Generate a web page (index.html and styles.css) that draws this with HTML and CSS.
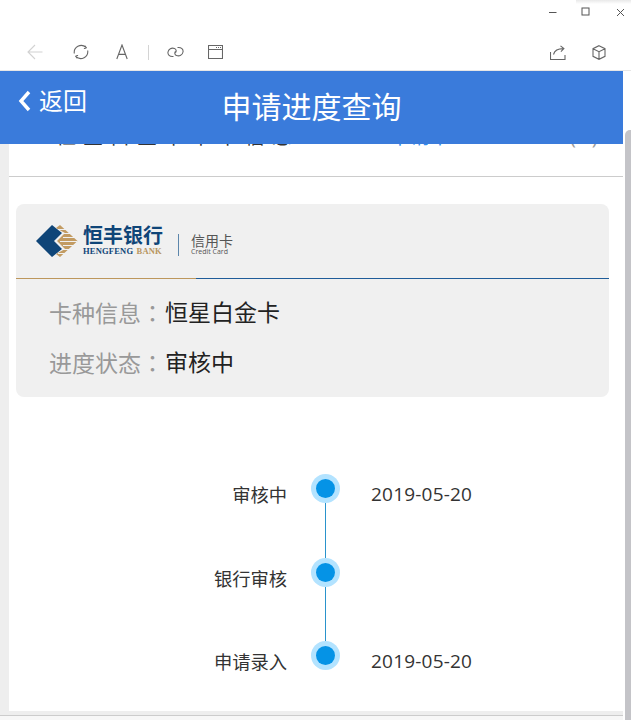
FILE: index.html
```html
<!DOCTYPE html>
<html lang="zh">
<head>
<meta charset="utf-8">
<title>申请进度查询</title>
<link rel="stylesheet" href="styles.css">
</head>
<body>
<div class="window">
  <div class="titlebar">
    <div class="corner-shadow"></div>
    <svg class="win-btn btn-min" width="8" height="8" viewBox="0 0 8 8"><path d="M0 4.5h7.5" /></svg>
    <svg class="win-btn btn-max" width="9" height="9" viewBox="0 0 9 9"><rect x="1" y="1" width="7" height="7" /></svg>
    <svg class="win-btn btn-close" width="9" height="9" viewBox="0 0 9 9"><path d="M1 1l7 7M8 1l-7 7" /></svg>
  </div>
  <div class="toolbar">
    <svg class="tool tool-back" width="16" height="16" viewBox="0 0 16 16"><path d="M15.500 8H1M8 1L1 8l7 7" /></svg>
    <svg class="tool tool-reload" width="16" height="16" viewBox="0 0 16 16"><path d="M12.900 3.300A7 7 0 0 0 1.300 9.500M3.100 12.700A7 7 0 0 0 14.700 6.500" /><path class="tool-tip" d="M12 1.500l1.500 2.500-2.600.6M4 14.500L2.500 12l2.600-.6" /></svg>
    <svg class="tool tool-a" width="12" height="16" viewBox="0 0 12 16"><path d="M.8 15L6 1l5.200 14M2.600 10.400h6.800" /></svg>
    <span class="tool-sep"></span>
    <svg class="tool tool-link" width="17" height="14" viewBox="0 0 17 14"><path d="M6.500 11.500C2.500 12 .5 9.500 1 7 1.500 4 4.500 2.500 7.500 3.500 9.500 4.200 9.500 6.500 8.500 7.500M10.500 2.500C14.500 2 16.500 4.500 16 7 15.500 10 12.500 11.500 9.500 10.500 7.500 9.800 7.500 7.500 8.500 6.500" /></svg>
    <svg class="tool tool-win" width="15" height="14" viewBox="0 0 15 14"><path d="M.5.5h14v13H.5zM.5 4.500h14" /><path class="dots" d="M8 2.500h5" /></svg>
    <span class="tool-space"></span>
    <svg class="tool tool-share" width="16" height="15" viewBox="0 0 16 15"><path d="M.5 7v7.500h14.500V10" /><path d="M3.500 9.500C4.500 5.500 8 3.600 13.500 3.600M10.500.8l3.400 2.800-3 3" /></svg>
    <svg class="tool tool-cube" width="14" height="15" viewBox="0 0 14 15"><path d="M7 .7l6 3v7.600l-6 3-6-3V3.700zM1 3.700l6 3 6-3M7 6.700v7.600" /></svg>
  </div>
  <div class="stage">
    <div class="page">
      <header class="app-header">
        <a class="back">
          <svg width="13" height="22" viewBox="0 0 13 22"><path d="M11 2L3 11l8 9" /></svg>
          <span>返回</span>
        </a>
        <h1 class="app-title">申请进度查询</h1>
      </header>
      <div class="page-body">
        <div class="gutter"></div>
        <main class="content">
          <div class="peek-row">
            <span class="peek-name">恒星白金卡申卡信息</span>
            <span class="peek-link">申请中</span>
            <span class="peek-more">(...)</span>
          </div>
          <section class="card">
            <div class="logo-row">
              <svg class="bank-mark" width="42" height="32" viewBox="0 0 42 32">
                <path class="mark-blue" d="M16 0L26 8 18 16 26 24 16 32 0 16z" />
                <path class="mark-gold" d="M24 0L41.500 16 24 32 20 29 29 24 21 16 29 8 20 3z" />
                <path class="mark-lines" d="M22 4.500h12M27 8.500h11M27 12.500h13M24 16.500h17M27 20.500h13M27 24.500h11M22 28.500h12" />
              </svg>
              <div class="bank-name">
                <span class="bank-cn">恒丰银行</span>
                <span class="bank-en">HENGFENG <em>BANK</em></span>
              </div>
              <span class="logo-sep"></span>
              <div class="card-name">
                <span class="card-cn">信用卡</span>
                <span class="card-en">Credit Card</span>
              </div>
            </div>
            <div class="rule"><span class="rule-gold"></span><span class="rule-blue"></span></div>
            <div class="info">
              <div class="info-row"><span class="info-label">卡种信息<span class="colon" lang="zh-TW">：</span></span><span class="info-value">恒星白金卡</span></div>
              <div class="info-row"><span class="info-label">进度状态<span class="colon" lang="zh-TW">：</span></span><span class="info-value">审核中</span></div>
            </div>
          </section>
          <section class="timeline">
            <div class="step">
              <span class="step-name">审核中</span>
              <span class="step-node"><i class="dot"></i></span>
              <span class="step-date">2019-05-20</span>
            </div>
            <div class="step">
              <span class="step-name">银行审核</span>
              <span class="step-node"><i class="dot"></i></span>
              <span class="step-date"></span>
            </div>
            <div class="step step-last">
              <span class="step-name">申请录入</span>
              <span class="step-node"><i class="dot"></i></span>
              <span class="step-date">2019-05-20</span>
            </div>
          </section>
        </main>
      </div>
      <div class="bottom-strip"></div>
      <div class="bottom-line"></div>
    </div>
    <div class="scroll-col"><div class="thumb"></div></div>
  </div>
</div>
</body>
</html>
```
FILE: styles.css
```css
* { box-sizing: border-box; }
html, body { margin: 0; height: 100%; background: #fff; overflow: hidden; }
body { font-family: "Open Sans", "Noto Sans CJK SC", sans-serif; color: #333; }
.window { width: 631px; height: 720px; display: flex; flex-direction: column; background: #fff; }

.titlebar { height: 32px; position: relative; flex: none; }
.corner-shadow { position: absolute; right: 0; top: 0; width: 55px; height: 4px; background: linear-gradient(#e9e9e9, #fff); }
.win-btn { position: absolute; fill: none; stroke: #555; stroke-width: 1; }
.btn-min { left: 549px; top: 8px; }
.btn-max { left: 581px; top: 7px; }
.btn-close { left: 616px; top: 8px; }

.toolbar { height: 39px; flex: none; display: flex; align-items: center; border-bottom: 1px solid #e6e6e6; padding: 2px 0 0 27px; }
.tool { flex: none; fill: none; stroke: #666; stroke-width: 1.1; }
.tool-back { stroke: #d2d2d2; }
.tool-reload { margin-left: 30px; }
.tool-tip { stroke-width: 1; }
.tool-a { margin-left: 27px; }
.tool-sep { width: 1px; height: 15px; background: #d4d4d4; margin-left: 20px; flex: none; }
.tool-link { margin-left: 18px; }
.tool-win { margin-left: 24px; }
.dots { stroke-dasharray: 1 1; }
.tool-space { flex: 1; }
.tool-share { margin-right: 26px; }
.tool-cube { margin-right: 25px; }

.stage { flex: 1; display: flex; min-height: 0; }
.page { width: 623px; flex: none; display: flex; flex-direction: column; }
.app-header { height: 73px; flex: none; background: #3a7bdb; position: relative; display: flex; justify-content: center; color: #fff; }
.back { position: absolute; left: 18px; top: 15px; display: flex; align-items: center; gap: 8px; font-size: 24px; line-height: 30px; }
.back svg { fill: none; stroke: #fff; stroke-width: 3.4; }
.app-title { margin: 0; font-size: 30px; font-weight: 400; line-height: 72px; }

.page-body { flex: 1; display: flex; min-height: 0; }
.gutter { width: 9px; flex: none; background: #eee; }
.content { flex: 1; background: #fff; }

.peek-row { height: 33px; border-bottom: 1px solid #ccc; position: relative; overflow: hidden; }
.peek-row span { position: absolute; bottom: 29px; font-size: 20px; line-height: 20px; white-space: nowrap; }
.peek-name { left: 47px; color: #333; letter-spacing: 7px; }
.peek-link { left: 381px; color: #2e8df0; font-size: 16px; }
.peek-more { left: 561px; color: #999; }

.card { margin: 27px 14px 0 7px; background: #f0f0f0; border-radius: 8px; height: 193px; display: flex; flex-direction: column; }
.logo-row { height: 74px; display: flex; align-items: center; padding: 0 0 0 20px; }
.bank-mark { flex: none; }
.mark-blue { fill: #0f4578; }
.mark-gold { fill: #c29b62; }
.mark-lines { fill: none; stroke: #f0f0f0; stroke-width: 1; }
.bank-name { display: flex; flex-direction: column; margin: -2px 0 0 5px; color: #0f4578; }
.bank-cn { font-size: 20px; font-weight: 700; line-height: 23px; }
.bank-en { font-family: "Liberation Serif", serif; font-weight: 700; font-size: 8.500px; line-height: 9px; white-space: nowrap; letter-spacing: .2px; }
.bank-en em { font-style: normal; color: #b8955f; margin-left: 1px; }
.logo-sep { width: 1px; height: 22px; background: #5c86ab; margin: 8px 12px 0 15px; flex: none; }
.card-name { display: flex; flex-direction: column; color: #555; margin-top: 7px; }
.card-cn { font-size: 14px; line-height: 15px; }
.card-en { font-size: 7px; line-height: 8px; white-space: nowrap; }
.rule { display: flex; height: 1px; flex: none; }
.rule-gold { width: 180px; background: #bd975c; }
.rule-blue { flex: 1; background: #1f5c99; }
.info { padding: 9px 0 0 33px; }
.info-row { font-size: 23px; line-height: 49px; white-space: nowrap; display: flex; }
.info-label { color: #999; width: 117px; flex: none; }
.colon { font-family: "Noto Sans CJK TC", sans-serif; }
.info-value { color: #222; margin-left: -1px; }

.timeline { margin-top: 77px; display: flex; flex-direction: column; }
.step { height: 83.500px; display: flex; position: relative; }
.step-name { width: 278px; text-align: right; font-size: 18.300px; line-height: 24px; margin-top: 9px; color: #333; }
.step-node { width: 29px; height: 29px; margin: 0 0 0 24px; border-radius: 50%; background: #b3e3ff; display: flex; align-items: center; justify-content: center; position: relative; flex: none; }
.dot { width: 19px; height: 19px; border-radius: 50%; background: #0593e6; display: block; }
.step-node::after { content: ""; position: absolute; left: 14px; top: 29px; width: 1px; height: 55px; background: #2a93cc; }
.step-last .step-node::after { display: none; }
.step-date { margin: 7px 0 0 31px; font-size: 19px; line-height: 26px; color: #333; letter-spacing: .2px; }

.bottom-strip { height: 4px; flex: none; background: #eee; }
.bottom-line { height: 5px; flex: none; border-top: 1px solid #ccc; background: #f7f7f7; }

.scroll-col { flex: 1; padding: 59px 0 0 2px; }
.thumb { height: 100%; background: #c4c4c8; border-radius: 5px 0 0 0; }
```
